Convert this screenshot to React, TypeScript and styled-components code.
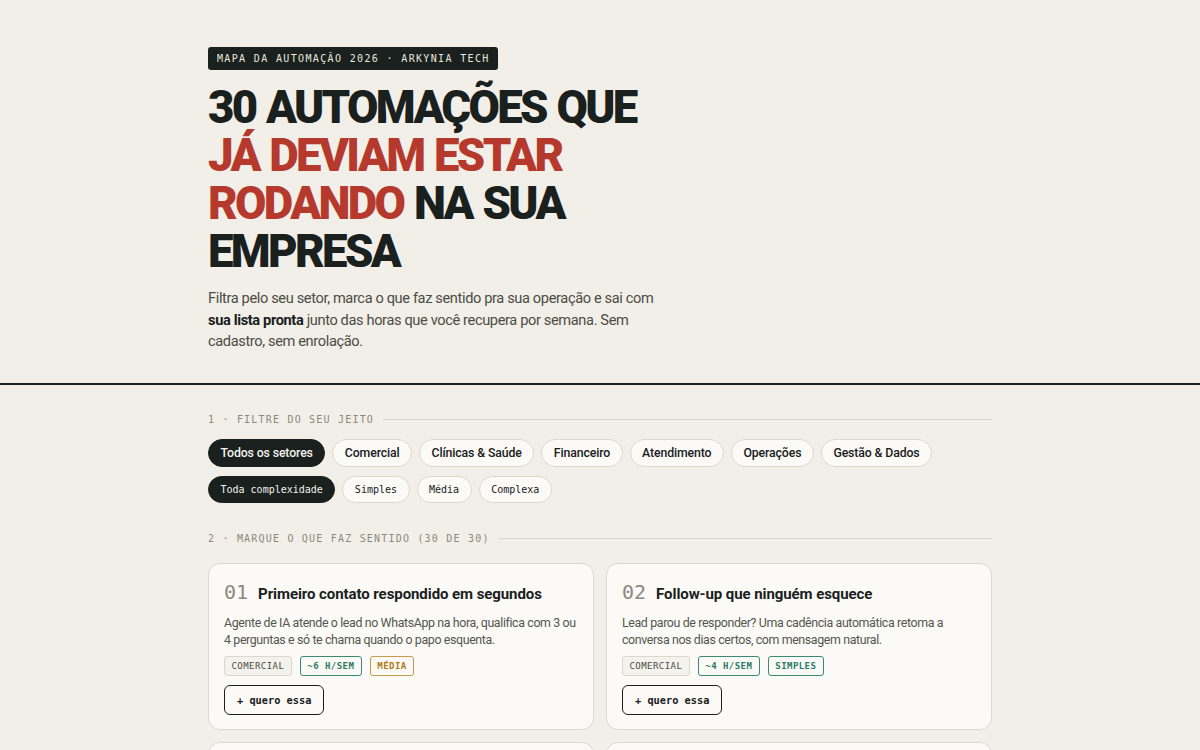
import React from "react";
import styled, { createGlobalStyle } from "styled-components";

const Global = createGlobalStyle`
  html, body { margin: 0; padding: 0; background: #f2efe8; }
  body { font-family: Roboto, "Noto Sans", sans-serif; color: #19201d; }
  * { box-sizing: border-box; }
`;

const MONO = `"DejaVu Sans Mono", "Liberation Mono", monospace`;

const Page = styled.div`
  background: #f2efe8;
  min-height: 100vh;
`;

const Hero = styled.header`
  padding: 47px 0 30px;
  border-bottom: 2px solid #19201d;
`;

const Container = styled.div`
  max-width: 784px;
  margin: 0 auto;
`;

const Kicker = styled.div`
  display: inline-block;
  background: #19201d;
  color: #e9e6dd;
  font-family: ${MONO};
  font-size: 10px;
  letter-spacing: 0.135em;
  padding: 5px 8px 5px 9px;
  border-radius: 3px;
  line-height: 13px;
`;

const Headline = styled.h1`
  margin: 14px 0 0;
  font-family: Roboto, sans-serif;
  font-weight: 900;
  font-size: 45.5px;
  line-height: 48px;
  letter-spacing: -0.058em;
  word-spacing: 0.04em;
  text-transform: uppercase;
  color: #19201d;
`;

const Accent = styled.span`
  color: #b5392c;
`;

const Lead = styled.p`
  margin: 12px 0 0;
  max-width: 470px;
  font-size: 14.6px;
  line-height: 21.5px;
  color: #4b4c46;
  letter-spacing: -0.025em;
  strong { color: #19201d; font-weight: 700; }
`;

const Main = styled.main`
  padding: 29px 0 40px;
`;

const SectionLabel = styled.div`
  display: flex;
  align-items: center;
  gap: 9px;
  font-family: ${MONO};
  font-size: 10px;
  letter-spacing: 0.12em;
  color: #8b887f;
  text-transform: uppercase;
  &::after {
    content: "";
    flex: 1;
    height: 1px;
    background: #d8d4ca;
  }
`;

const Spacer = styled.div<{ $h: number }>`
  height: ${(p) => p.$h}px;
`;

const PillRow = styled.div<{ $mt: number }>`
  display: flex;
  flex-wrap: wrap;
  gap: 7px;
  margin-top: ${(p) => p.$mt}px;
`;

const Pill = styled.button<{ $active?: boolean; $mono?: boolean }>`
  height: ${(p) => (p.$mono ? 27 : 28)}px;
  padding: 0 11.5px;
  border-radius: 14px;
  border: 1px solid ${(p) => (p.$active ? "#19201d" : "#dcd8ce")};
  background: ${(p) => (p.$active ? "#19201d" : "#fbfaf6")};
  color: ${(p) => (p.$active ? "#f4f2ec" : "#19201d")};
  font-family: ${(p) => (p.$mono ? MONO : `Roboto, sans-serif`)};
  font-size: ${(p) => (p.$mono ? "10px" : "12.3px")};
  font-weight: 500;
  cursor: pointer;
  letter-spacing: ${(p) => (p.$mono ? "0" : "-0.01em")};
`;

const Grid = styled.div`
  display: grid;
  grid-template-columns: 1fr 1fr;
  gap: 12px;
  margin-top: 19px;
`;

const Card = styled.article`
  background: #fbfaf6;
  border: 1px solid #dcd8ce;
  border-radius: 12px;
  padding: 16px 15px 14px;
`;

const CardHead = styled.div`
  display: flex;
  align-items: baseline;
  gap: 10px;
`;

const Num = styled.span`
  font-family: ${MONO};
  font-size: 20px;
  color: #8b887f;
  line-height: 24px;
`;

const Title = styled.h3`
  margin: 0;
  font-size: 15px;
  font-weight: 700;
  color: #19201d;
  letter-spacing: -0.005em;
`;

const Desc = styled.p`
  margin: 10px 0 0;
  font-size: 12.4px;
  line-height: 17px;
  color: #55564f;
  letter-spacing: -0.03em;
`;

const Tags = styled.div`
  display: flex;
  gap: 8px;
  margin-top: 8px;
`;

type Tone = "neutral" | "green" | "amber";
const toneColor: Record<Tone, [string, string, string]> = {
  neutral: ["#dcd8ce", "#4b4c46", "#f4f2ec"],
  green: ["#3a8a76", "#2c7a66", "transparent"],
  amber: ["#c99a4a", "#b07a22", "transparent"],
};

const Tag = styled.span<{ $tone: Tone }>`
  display: inline-flex;
  align-items: center;
  height: 20px;
  padding: 0 6.5px;
  border-radius: 3px;
  border: 1px solid ${(p) => toneColor[p.$tone][0]};
  color: ${(p) => toneColor[p.$tone][1]};
  background: ${(p) => toneColor[p.$tone][2]};
  font-family: ${MONO};
  font-size: 9px;
  font-weight: ${(p) => (p.$tone === "neutral" ? 400 : 700)};
  letter-spacing: 0.05em;
`;

const WantButton = styled.button`
  margin-top: 9px;
  height: 30px;
  padding: 0 12px;
  border: 1.5px solid #19201d;
  border-radius: 6px;
  background: transparent;
  font-family: ${MONO};
  font-size: 10.3px;
  font-weight: 700;
  color: #19201d;
  cursor: pointer;
`;

const sectors = [
  "Todos os setores",
  "Comercial",
  "Clínicas & Saúde",
  "Financeiro",
  "Atendimento",
  "Operações",
  "Gestão & Dados",
];
const levels = ["Toda complexidade", "Simples", "Média", "Complexa"];

type Item = {
  n: string;
  title: string;
  desc: string;
  sector: string;
  hours: string;
  level: string;
};

const items: Item[] = [
  {
    n: "01",
    title: "Primeiro contato respondido em segundos",
    desc: "Agente de IA atende o lead no WhatsApp na hora, qualifica com 3 ou 4 perguntas e só te chama quando o papo esquenta.",
    sector: "COMERCIAL",
    hours: "~6 H/SEM",
    level: "MÉDIA",
  },
  {
    n: "02",
    title: "Follow-up que ninguém esquece",
    desc: "Lead parou de responder? Uma cadência automática retoma a conversa nos dias certos, com mensagem natural.",
    sector: "COMERCIAL",
    hours: "~4 H/SEM",
    level: "SIMPLES",
  },
  {
    n: "03",
    title: "Proposta gerada a partir da conversa",
    desc: "A IA lê o histórico do atendimento e monta a proposta no seu modelo, pronta para revisar e enviar.",
    sector: "COMERCIAL",
    hours: "~5 H/SEM",
    level: "MÉDIA",
  },
  {
    n: "04",
    title: "CRM atualizado sem digitar nada",
    desc: "Cada conversa vira registro no CRM: etapa, valor, próximos passos. Sem planilha paralela.",
    sector: "COMERCIAL",
    hours: "~3 H/SEM",
    level: "SIMPLES",
  },
];

export default function App() {
  return (
    <Page>
      <Global />
      <Hero>
        <Container>
          <Kicker>MAPA DA AUTOMAÇÃO 2026 · ARKYNIA TECH</Kicker>
          <Headline>
            30 automações que
            <br />
            <Accent>já deviam estar</Accent>
            <br />
            <Accent>rodando</Accent> na sua
            <br />
            empresa
          </Headline>
          <Lead>
            Filtra pelo seu setor, marca o que faz sentido pra sua operação e sai com{" "}
            <strong>sua lista pronta</strong> junto das horas que você recupera por semana. Sem
            cadastro, sem enrolação.
          </Lead>
        </Container>
      </Hero>
      <Main>
        <Container>
          <SectionLabel>1 · Filtre do seu jeito</SectionLabel>
          <PillRow $mt={14}>
            {sectors.map((s, i) => (
              <Pill key={s} $active={i === 0}>
                {s}
              </Pill>
            ))}
          </PillRow>
          <PillRow $mt={9}>
            {levels.map((s, i) => (
              <Pill key={s} $mono $active={i === 0}>
                {s}
              </Pill>
            ))}
          </PillRow>
          <Spacer $h={30} />
          <SectionLabel>2 · Marque o que faz sentido (30 de 30)</SectionLabel>
          <Grid>
            {items.map((it) => (
              <Card key={it.n}>
                <CardHead>
                  <Num>{it.n}</Num>
                  <Title>{it.title}</Title>
                </CardHead>
                <Desc>{it.desc}</Desc>
                <Tags>
                  <Tag $tone="neutral">{it.sector}</Tag>
                  <Tag $tone="green">{it.hours}</Tag>
                  <Tag $tone={it.level === "SIMPLES" ? "green" : "amber"}>{it.level}</Tag>
                </Tags>
                <WantButton>+ quero essa</WantButton>
              </Card>
            ))}
          </Grid>
        </Container>
      </Main>
    </Page>
  );
}
